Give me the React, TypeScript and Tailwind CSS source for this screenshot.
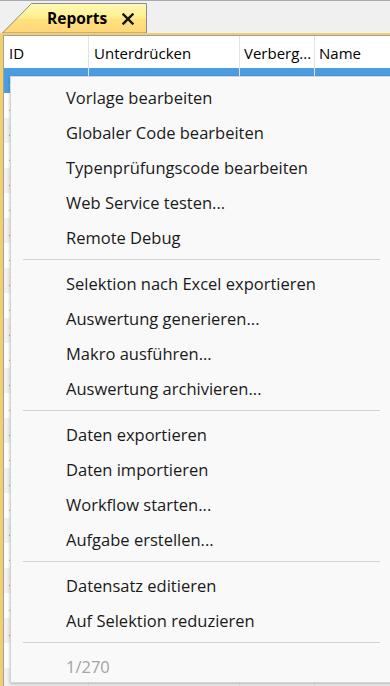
import React from "react";

const font = { fontFamily: '"Open Sans", "Noto Sans", "DejaVu Sans", sans-serif' };

type Entry = { label: string; disabled?: boolean } | "sep";

const entries: Entry[] = [
  { label: "Vorlage bearbeiten" },
  { label: "Globaler Code bearbeiten" },
  { label: "Typenprüfungscode bearbeiten" },
  { label: "Web Service testen..." },
  { label: "Remote Debug" },
  "sep",
  { label: "Selektion nach Excel exportieren" },
  { label: "Auswertung generieren..." },
  { label: "Makro ausführen..." },
  { label: "Auswertung archivieren..." },
  "sep",
  { label: "Daten exportieren" },
  { label: "Daten importieren" },
  { label: "Workflow starten..." },
  { label: "Aufgabe erstellen..." },
  "sep",
  { label: "Datensatz editieren" },
  { label: "Auf Selektion reduzieren" },
  "sep",
  { label: "1/270", disabled: true },
];

const rows = Array.from({ length: 25 }, (_, i) => i);

export default function App() {
  return (
    <div className="relative w-[390px] h-[686px] overflow-hidden bg-[#f0f0f0]" style={font}>
      {/* Tab strip */}
      <div className="h-[33px] border-t border-[#a8a8b0] flex items-end pl-[2px] bg-[#f0f0f0]">
        <div className="relative w-[146px] h-[30px] flex items-center">
          <svg className="absolute inset-0" width="146" height="30" viewBox="0 0 146 30">
            <defs>
              <linearGradient id="tabg" x1="0" y1="0" x2="0" y2="1">
                <stop offset="0" stopColor="#fff9b8" />
                <stop offset="0.5" stopColor="#ffee8c" />
                <stop offset="0.52" stopColor="#ffe07e" />
                <stop offset="1" stopColor="#ffd67a" />
              </linearGradient>
            </defs>
            <path d="M0.5 30 L29.5 0.5 L144.5 0.5 L144.5 30 Z" fill="url(#tabg)" stroke="#8a8a8a" strokeWidth="1" />
          </svg>
          <span className="relative ml-[45px] mt-[1px] text-[15.5px] font-bold text-black leading-none">Reports</span>
          <svg className="relative ml-[15px] mt-[1px]" width="12" height="12" viewBox="0 0 12 12">
            <path d="M1.5 1.5 L10.5 10.5 M10.5 1.5 L1.5 10.5" stroke="#111" strokeWidth="2.4" strokeLinecap="square" />
          </svg>
        </div>
      </div>

      {/* Content frame */}
      <div className="border-t-2 border-l-[3px] border-[#f2cf6a] h-[653px]">
        <div className="h-full border-t border-l border-[#a0a0a0] bg-white overflow-hidden">
          {/* header */}
          <div className="flex h-[32px] bg-white text-[15px] text-black">
            <div className="w-[85px] border-r border-[#e3e3e3] pl-[5px] pt-[3px] flex items-center">ID</div>
            <div className="w-[151px] border-r border-[#e3e3e3] pl-[5px] pt-[3px] flex items-center">Unterdrücken</div>
            <div className="w-[75px] border-r border-[#e3e3e3] pl-[4px] pt-[3px] flex items-center whitespace-nowrap">Verberg...</div>
            <div className="flex-1 pl-[4px] pt-[3px] flex items-center">Name</div>
          </div>
          {/* rows */}
          {rows.map((i) => (
            <div
              key={i}
              className={
                "flex h-[25px] text-[14px] leading-none " +
                (i === 0 ? "bg-[#4a9de0] text-white" : i % 2 === 0 ? "bg-[#f2f2f2] text-black" : "bg-white text-black")
              }
            >
              <div className="w-[85px] border-r border-[#e3e3e3] pl-[5px] flex items-center overflow-hidden">
                {i < 23 ? `2${(i * 7) % 10}1${i % 10}` : ""}
              </div>
              <div className="w-[151px] border-r border-[#e3e3e3]" />
              <div className="w-[75px] border-r border-[#e3e3e3]" />
              <div className="flex-1" />
            </div>
          ))}
        </div>
      </div>

      {/* Context menu */}
      <div className="absolute left-[10px] top-[76px] w-[383px] h-[607px] bg-[#f9f9f9] border border-[#d4d4d4] shadow-[0_1px_3px_rgba(0,0,0,0.25)] overflow-hidden pt-[4px]">
        {entries.map((e, idx) =>
          e === "sep" ? (
            <div key={idx} className="pt-[3px] pb-[7px] px-[12px]">
              <div className="h-px bg-[#d3d3d3]" />
            </div>
          ) : (
            <div
              key={idx}
              className={
                "h-[35px] flex items-center pl-[55px] text-[16.5px] whitespace-nowrap " +
                (e.disabled ? "text-[#a3a3a3]" : "text-[#1a1a1a]")
              }
            >
              {e.label}
            </div>
          )
        )}
      </div>
    </div>
  );
}
